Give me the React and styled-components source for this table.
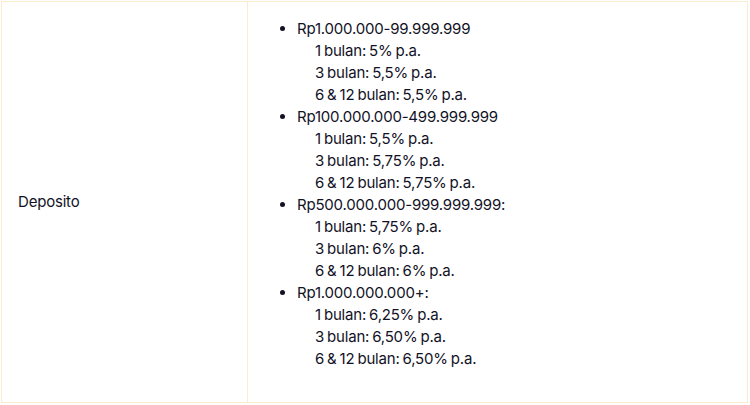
import React from 'react';
import styled, { createGlobalStyle } from 'styled-components';

const GlobalStyle = createGlobalStyle`
  html, body {
    margin: 0;
    padding: 0;
    background: #fff;
  }
  body {
    font-family: Inter, 'Noto Sans', sans-serif;
    color: #121226;
  }
`;

const Table = styled.table`
  margin: 1px 0 0 1px;
  width: 747px;
  border-collapse: collapse;
  font-size: 15px;
  line-height: 22px;
  letter-spacing: -0.2px;
  word-spacing: -1px;
`;

const Cell = styled.td`
  border: 1px solid #fbebcf;
  padding: ${({ $padded }) => ($padded ? '16px 16px 32px 16px' : '0 16px')};
  vertical-align: middle;
  width: ${({ $width }) => $width || 'auto'};
  box-sizing: border-box;
`;

const List = styled.ul`
  margin: 0;
  padding-left: 33px;

  li::marker {
    font-size: 15px;
  }
`;

const Tier = styled.li`
  margin: 0;
`;

const Rate = styled.div`
  padding-left: 18px;
`;

const tiers = [
  {
    range: 'Rp1.000.000-99.999.999',
    rates: ['1 bulan: 5% p.a.', '3 bulan: 5,5% p.a.', '6 & 12 bulan: 5,5% p.a.'],
  },
  {
    range: 'Rp100.000.000-499.999.999',
    rates: ['1 bulan: 5,5% p.a.', '3 bulan: 5,75% p.a.', '6 & 12 bulan: 5,75% p.a.'],
  },
  {
    range: 'Rp500.000.000-999.999.999:',
    rates: ['1 bulan: 5,75% p.a.', '3 bulan: 6% p.a.', '6 & 12 bulan: 6% p.a.'],
  },
  {
    range: 'Rp1.000.000.000+:',
    rates: ['1 bulan: 6,25% p.a.', '3 bulan: 6,50% p.a.', '6 & 12 bulan: 6,50% p.a.'],
  },
];

export default function App() {
  return (
    <>
      <GlobalStyle />
      <Table>
        <tbody>
          <tr>
            <Cell $width="246px">Deposito</Cell>
            <Cell $padded>
              <List>
                {tiers.map(tier => (
                  <Tier key={tier.range}>
                    {tier.range}
                    {tier.rates.map(rate => (
                      <Rate key={rate}>{rate}</Rate>
                    ))}
                  </Tier>
                ))}
              </List>
            </Cell>
          </tr>
        </tbody>
      </Table>
    </>
  );
}
